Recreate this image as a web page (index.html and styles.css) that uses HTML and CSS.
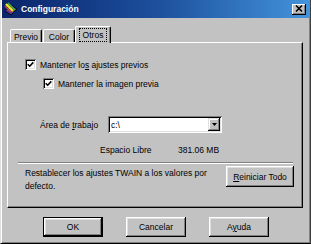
FILE: index.html
```html
<!DOCTYPE html>
<html lang="es">
<head>
<meta charset="utf-8">
<title>Configuración</title>
<link rel="stylesheet" href="styles.css">
</head>
<body>
<div class="window">
  <div class="titlebar">
    <svg class="app-icon" viewBox="0 0 14 14" width="14" height="14">
      <path d="M1 9 L7 3 L13 7 L7 13 Z" fill="#5a3a8a" stroke="#000" stroke-width="0.8"/>
      <path d="M2 2 L9 9" stroke="#e8e820" stroke-width="2.4"/>
      <path d="M4 1 L11 8" stroke="#40b040" stroke-width="1.6"/>
      <path d="M1 4 L7 10" stroke="#d04040" stroke-width="1.2"/>
    </svg>
    <span class="title">Configuración</span>
    <div class="close">
      <svg viewBox="0 0 8 7" width="8" height="7"><path d="M1 0.5 L7 6.5 M7 0.5 L1 6.5" stroke="#000" stroke-width="1.6"/></svg>
    </div>
  </div>

  <div class="tabs">
    <div class="tab">Previo</div>
    <div class="tab tab-color">Color</div>
    <div class="tab active"><span class="focus">Otros</span></div>
  </div>

  <div class="panel">
    <label class="check check-1">
      <span class="box"><svg viewBox="0 0 7 7" width="7" height="7"><path d="M0.7 3.2 L2.7 5.2 L6.3 1.4" fill="none" stroke="#000" stroke-width="1.6"/></svg></span>
      <span>Mantener lo<u>s</u> ajustes previos</span>
    </label>
    <label class="check check-2">
      <span class="box"><svg viewBox="0 0 7 7" width="7" height="7"><path d="M0.7 3.2 L2.7 5.2 L6.3 1.4" fill="none" stroke="#000" stroke-width="1.6"/></svg></span>
      <span>Mantener la imagen previa</span>
    </label>

    <div class="area-row">
      <span class="area-label">Área de <u>t</u>rabajo</span>
      <div class="combo">
        <span class="combo-value">c:\</span>
        <span class="drop"><svg viewBox="0 0 5 3" width="5" height="3"><path d="M0 0 H5 L2.5 3 Z" fill="#000"/></svg></span>
      </div>
    </div>

    <div class="free-row">
      <span class="free-label">Espacio Libre</span>
      <span class="free-value">381.06 MB</span>
    </div>

    <div class="sep"></div>

    <div class="reset-row">
      <p class="reset-text">Restablecer los ajustes TWAIN a los valores por defecto.</p>
      <button class="btn btn-reset"><u>R</u>einiciar Todo</button>
    </div>
  </div>

  <div class="buttons">
    <button class="btn btn-default">OK</button>
    <button class="btn">Cancelar</button>
    <button class="btn">A<u>y</u>uda</button>
  </div>
</div>
</body>
</html>
```

FILE: styles.css
```css
* { box-sizing: border-box; }
html, body { margin: 0; padding: 0; }
body {
  width: 311px;
  height: 244px;
  overflow: hidden;
  background: #c0c0c0;
  font-family: "Liberation Sans", Arial, sans-serif;
  font-size: 8.5px;
  color: #000;
}
u { text-decoration: underline; text-underline-offset: 1px; }

.window {
  width: 311px;
  height: 244px;
  background: #c2c2c2;
  border-left: 1px solid #dfdfdf;
  border-right: 1px solid #404040;
  border-bottom: 1px solid #000;
  box-shadow: inset 1px 0 #fff, inset -1px -1px #808080;
  padding: 0 2px 2px 1px;
  display: flex;
  flex-direction: column;
}

.titlebar {
  height: 18px;
  margin-right: -2px;
  display: flex;
  align-items: center;
  padding: 0 2px 0 2px;
  background: linear-gradient(to right, #0a246a 0%, #1c4f9c 50%, #4393dc 100%);
  color: #fff;
  font-weight: bold;
  font-size: 8.5px;
}
.app-icon { flex: none; margin-right: 3px; }
.title { flex: 1; }
.close {
  width: 14px;
  height: 11px;
  margin-right: 2px;
  background: #c0c0c0;
  box-shadow: inset -1px -1px #000, inset 1px 1px #fff, inset -2px -2px #808080;
  display: flex;
  align-items: center;
  justify-content: center;
  padding-bottom: 1px;
}

.tabs {
  margin-top: 8px;
  padding-left: 8px;
  height: 16px;
  display: flex;
  align-items: flex-end;
  position: relative;
  z-index: 1;
}
.tab {
  width: 32px;
  height: 13px;
  display: flex;
  align-items: center;
  justify-content: center;
  background: #c2c2c2;
  border-top: 1px solid #fff;
  border-left: 1px solid #fff;
  border-right: 1px solid #000;
  border-radius: 2px 2px 0 0;
  box-shadow: inset -1px 0 #808080;
  padding-top: 1px;
}
.tab-color { margin-left: 1px; }
.tab.active {
  width: 36px;
  height: 17px;
  margin-bottom: -1px;
  padding-bottom: 1px;
}
.focus {
  outline: 1px dotted #000;
  outline-offset: 0;
  padding: 1px 3px 1px 3px;
  line-height: 10px;
}

.panel {
  margin-left: 5px;
  width: 296px;
  height: 166px;
  border-top: 1px solid #fff;
  border-left: 1px solid #fff;
  border-right: 1px solid #000;
  border-bottom: 1px solid #000;
  box-shadow: inset -1px -1px #808080;
  padding: 0 9px 0 10px;
  display: flex;
  flex-direction: column;
}

.check {
  display: flex;
  align-items: center;
  gap: 4px;
  height: 11px;
}
.check-1 { margin: 16px 0 0 7px; }
.check-2 { margin: 8px 0 0 25px; }
.box {
  width: 11px;
  height: 11px;
  background: #fff;
  box-shadow: inset 1px 1px #808080, inset -1px -1px #fff, inset 2px 2px #000, inset -2px -2px #dfdfdf;
  display: flex;
  align-items: center;
  justify-content: center;
  flex: none;
}

.area-row {
  margin: 27px 0 0 22px;
  display: flex;
  align-items: center;
  height: 17px;
}
.area-label { width: 68px; }
.combo {
  width: 114px;
  height: 17px;
  background: #fff;
  box-shadow: inset 1px 1px #808080, inset -1px -1px #fff, inset 2px 2px #000, inset -2px -2px #dfdfdf;
  display: flex;
  align-items: center;
  padding: 2px 2px 2px 3px;
}
.combo-value { flex: 1; }
.drop {
  width: 12px;
  height: 13px;
  background: #c0c0c0;
  box-shadow: inset -1px -1px #000, inset 1px 1px #dfdfdf, inset -2px -2px #808080, inset 2px 2px #fff;
  display: flex;
  align-items: center;
  justify-content: center;
}

.free-row {
  margin: 12px 0 0 82px;
  height: 10px;
  display: flex;
  align-items: center;
}
.free-label { width: 78px; }

.sep {
  margin-top: 7px;
  height: 2px;
  border-top: 1px solid #808080;
  border-bottom: 1px solid #fff;
}

.reset-row {
  display: flex;
  align-items: flex-start;
  justify-content: space-between;
  margin: 2px 0 0 7px;
}
.reset-text {
  margin: 0;
  width: 190px;
  line-height: 13px;
  padding-top: 1px;
}

.btn {
  font: inherit;
  color: #000;
  background: #c2c2c2;
  border: none;
  padding: 0;
  margin: 0;
  box-shadow: inset -1px -1px #000, inset 1px 1px #fff, inset -2px -2px #808080, inset 2px 2px #dfdfdf;
}
.btn-reset {
  width: 68px;
  height: 21px;
  margin-right: -1px;
}

.buttons {
  margin-top: 9px;
  padding-left: 41px;
  display: flex;
  gap: 23px;
}
.buttons .btn {
  width: 60px;
  height: 20px;
}
.btn-default {
  outline: 1px solid #000;
  outline-offset: -1px;
  box-shadow: inset -2px -2px #000, inset 2px 2px #fff, inset -3px -3px #808080, inset 3px 3px #dfdfdf;
}
```
